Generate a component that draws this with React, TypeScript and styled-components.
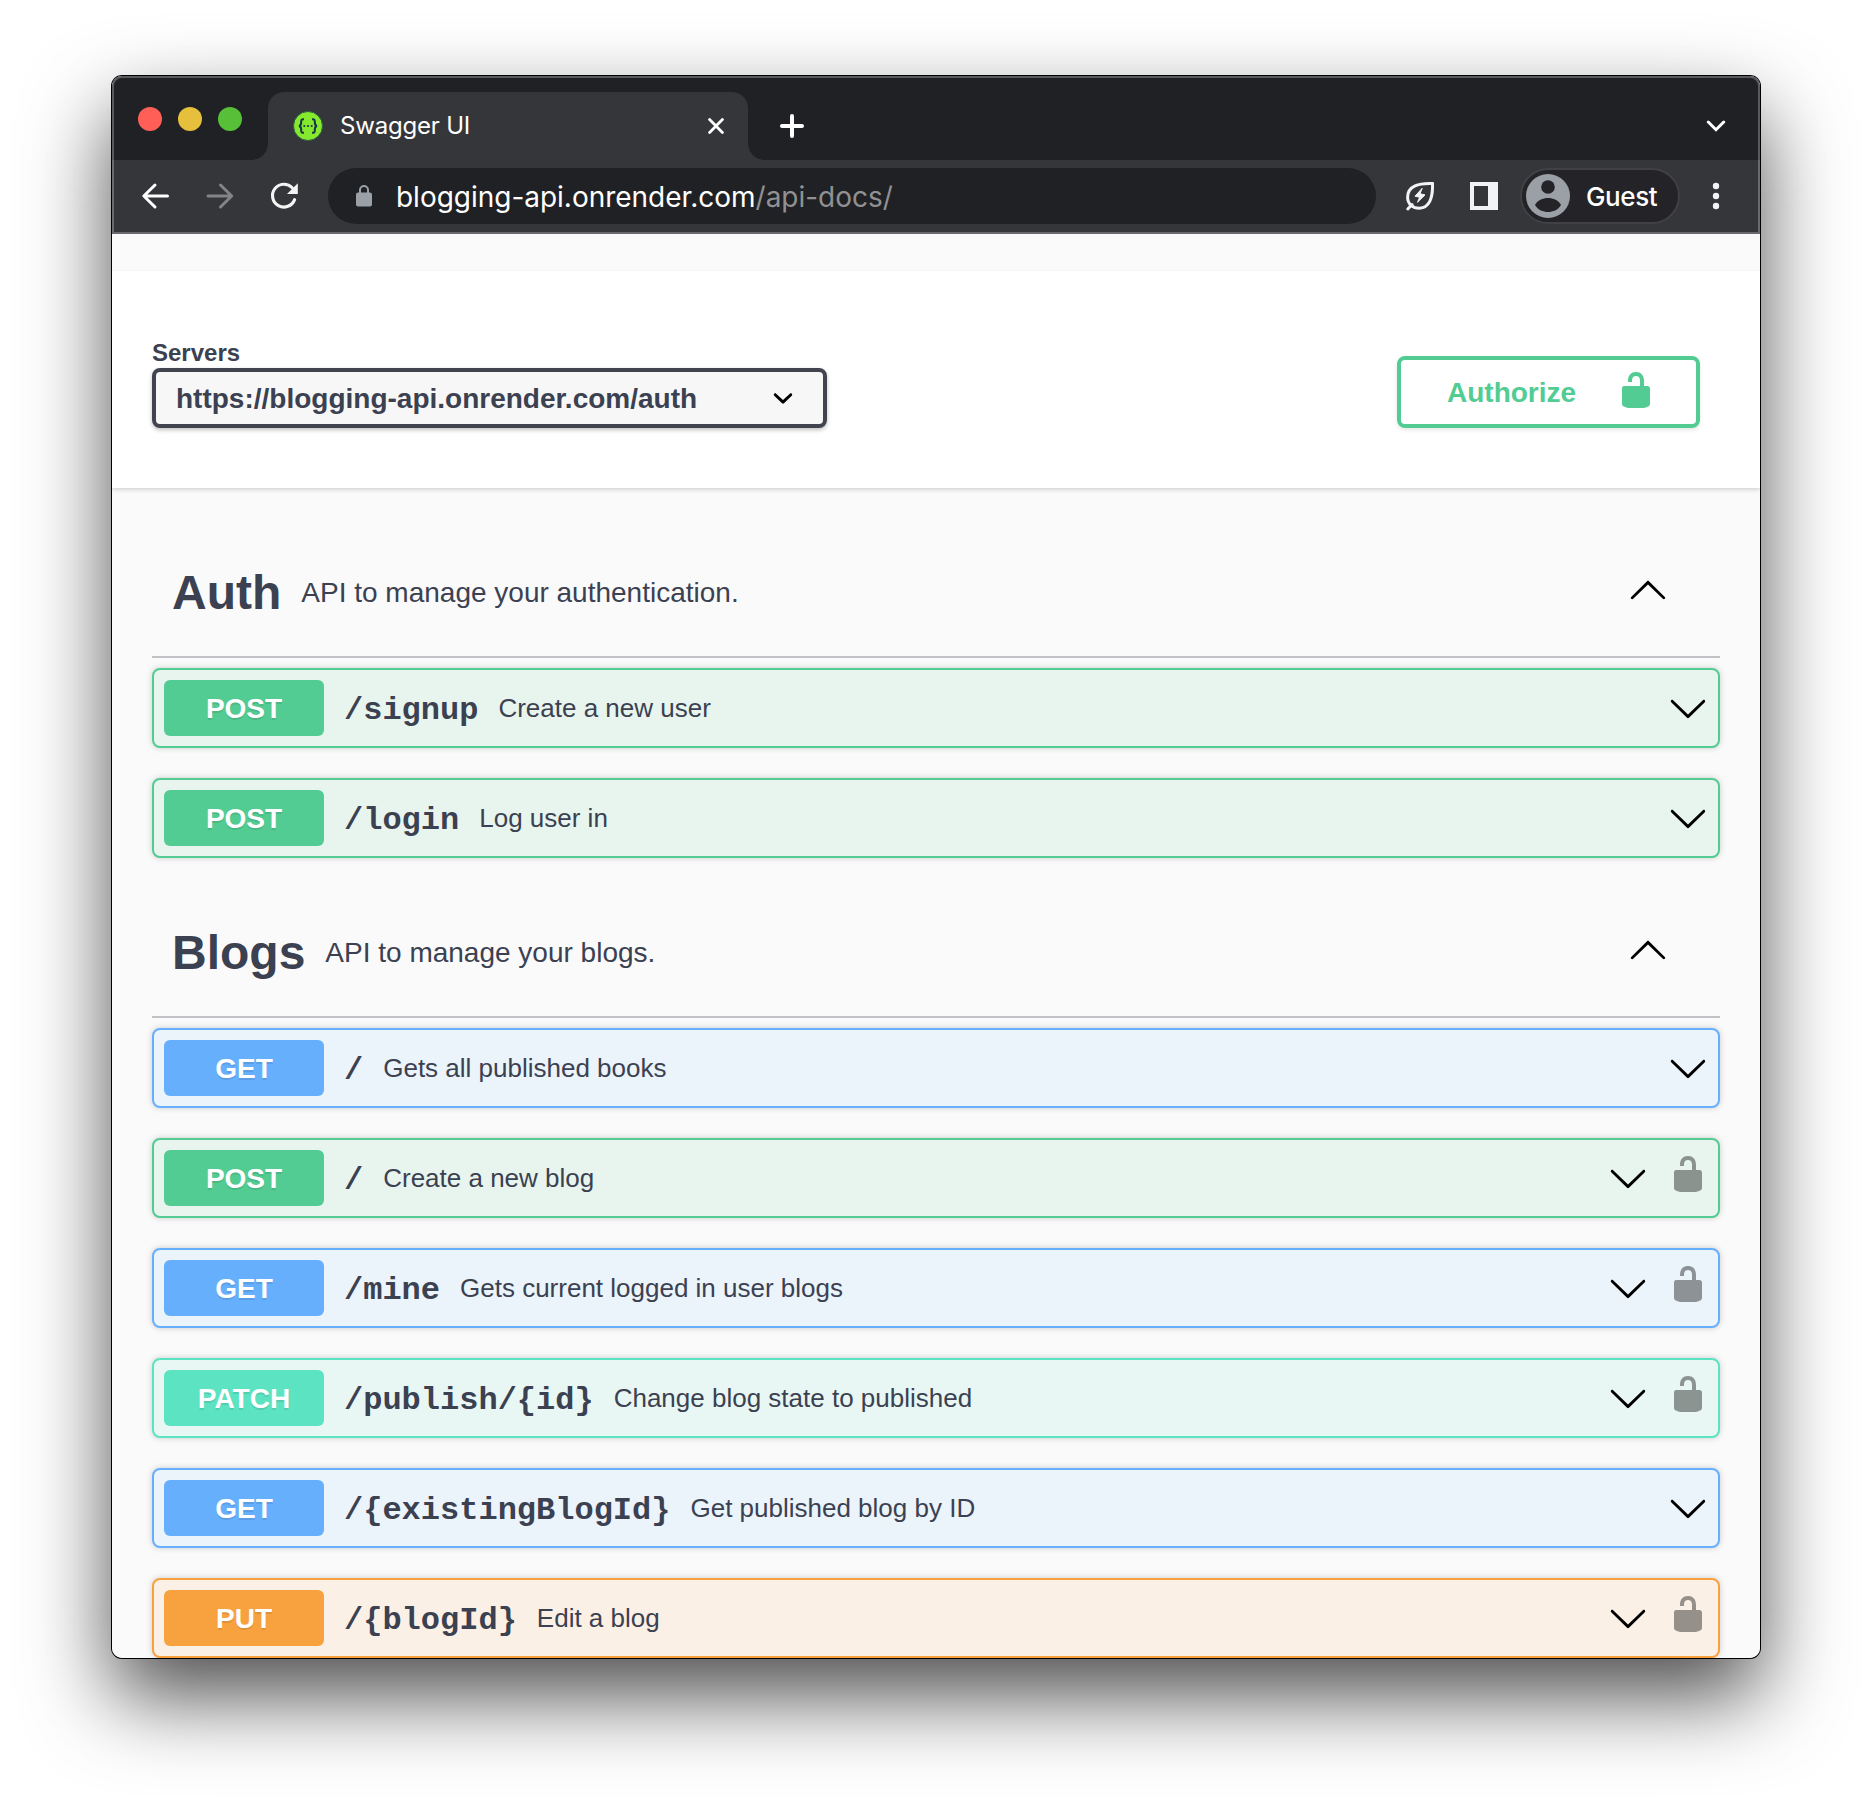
import React from 'react';
import styled, { createGlobalStyle } from 'styled-components';

const GlobalStyle = createGlobalStyle`
  * { box-sizing: border-box; }
  body {
    margin: 0;
    background: #fff;
    font-family: "Liberation Sans", Arial, sans-serif;
    color: #3b4151;
  }
`;

const Desktop = styled.div`
  height: 1806px;
  padding: 76px 0 0 112px;
  overflow: hidden;
`;

const Window = styled.div`
  width: 1648px;
  height: 1582px;
  border-radius: 10px;
  box-shadow: 0 0 0 1px #000, 0 38px 84px rgba(0, 0, 0, 0.7);
`;

const Clip = styled.div`
  display: flex;
  flex-direction: column;
  height: 100%;
  border-radius: 10px;
  overflow: hidden;
  background: #fafafa;
`;

const Chrome = styled.header`
  position: relative;
  flex: none;
  font-family: Inter, "Noto Sans", sans-serif;
  color: #fff;

  &::after {
    content: '';
    position: absolute;
    inset: 0;
    border: 2px solid rgba(255, 255, 255, 0.26);
    border-radius: 10px 10px 0 0;
    pointer-events: none;
  }
`;

const TabStrip = styled.div`
  display: flex;
  align-items: center;
  height: 84px;
  padding: 16px 34px 0 26px;
  background: #202124;
`;

const Lights = styled.div`
  display: flex;
  gap: 16px;
  margin: 0 26px 14px 0;
`;

const Light = styled.span<{ $color: string }>`
  width: 24px;
  height: 24px;
  border-radius: 50%;
  background: ${(p) => p.$color};
`;

const Tab = styled.div`
  position: relative;
  display: flex;
  align-items: center;
  width: 480px;
  height: 68px;
  margin-right: 32px;
  padding: 0 24px 0 25px;
  border-radius: 16px 16px 0 0;
  background: #35363a;

  &::before,
  &::after {
    content: '';
    position: absolute;
    bottom: 0;
    width: 16px;
    height: 16px;
  }
  &::before {
    left: -16px;
    background: radial-gradient(circle at 0 0, transparent 15.5px, #35363a 16px);
  }
  &::after {
    right: -16px;
    background: radial-gradient(circle at 100% 0, transparent 15.5px, #35363a 16px);
  }
`;

const TabTitle = styled.span`
  flex: 1;
  margin-left: 17px;
  font-size: 24px;
  line-height: 30px;
  letter-spacing: -0.2px;
`;

const Spacer = styled.div`
  flex: 1;
`;

const Toolbar = styled.div`
  display: flex;
  align-items: center;
  height: 74px;
  padding-left: 28px;
  border-bottom: 2px solid #35363a;
  background: #35363a;
`;

const NavButtons = styled.div`
  display: flex;
  gap: 32px;
  margin-right: 28px;
`;

const Omnibox = styled.div`
  display: flex;
  align-items: center;
  width: 1048px;
  height: 56px;
  padding-left: 28px;
  border-radius: 28px;
  background: #202124;
`;

const Url = styled.span`
  margin-left: 24px;
  padding-top: 1px;
  font-size: 28px;
  line-height: 36px;
  letter-spacing: -0.02px;
  white-space: nowrap;
`;

const UrlPath = styled.span`
  color: #919193;
`;

const LeafSlot = styled.span`
  display: flex;
  margin: 2px 36px 0 30px;
`;

const PanelIcon = styled.span`
  width: 28px;
  height: 28px;
  border: 4px solid #f1f3f4;
  border-right-width: 10px;
`;

const Profile = styled.div`
  display: flex;
  align-items: center;
  width: 160px;
  height: 56px;
  margin: 0 32px 0 22px;
  padding-left: 4px;
  border: 2px solid #404045;
  border-radius: 28px;
  background: #242328;
`;

const ProfileName = styled.span`
  margin-left: 16px;
  padding-top: 1px;
  font-size: 26px;
  font-weight: 500;
  line-height: 32px;
  letter-spacing: -0.4px;
`;

const Page = styled.main`
  display: flex;
  flex-direction: column;
  flex: 1;
  padding-top: 37px;
`;

const SchemeBar = styled.section`
  display: flex;
  flex: none;
  justify-content: space-between;
  align-items: flex-end;
  height: 217px;
  padding: 0 60px 60px 40px;
  background: #fff;
  box-shadow: 0 2px 4px rgba(0, 0, 0, 0.15);
`;

const ServerField = styled.div`
  display: flex;
  flex-direction: column;
  width: 675px;
`;

const ServerLabel = styled.span`
  font-size: 24px;
  font-weight: 700;
  line-height: 31px;
`;

const ServerSelect = styled.div`
  display: flex;
  align-items: center;
  justify-content: space-between;
  height: 60px;
  padding: 0 20px;
  border: 4px solid #41444e;
  border-radius: 8px;
  background: #f7f7f7;
  box-shadow: 0 2px 4px rgba(0, 0, 0, 0.25);
  font-size: 28px;
  font-weight: 700;
`;

const AuthorizeButton = styled.div`
  display: flex;
  align-items: center;
  justify-content: space-between;
  width: 303px;
  height: 72px;
  padding: 0 40px 0 46px;
  border: 4px solid #52cc93;
  border-radius: 8px;
  box-shadow: 0 2px 4px rgba(0, 0, 0, 0.1);
  color: #52cc93;
  font-size: 28px;
  font-weight: 700;

  svg {
    margin-bottom: 4px;
  }
`;

const ButtonLabel = styled.span`
  padding-top: 2px;
`;

const Sections = styled.div`
  padding: 40px 40px 0;
`;

const TagHeader = styled.div`
  display: flex;
  align-items: center;
  height: 130px;
  margin-bottom: 10px;
  padding: 0 52px 0 20px;
  border-bottom: 2px solid rgba(59, 65, 81, 0.3);

  > svg {
    margin-bottom: 6px;
  }
`;

const TagName = styled.h3`
  margin: 0;
  font-size: 48px;
  font-weight: 700;
`;

const TagText = styled.span`
  flex: 1;
  padding: 2px 0 0 20px;
  font-size: 28px;
`;

const OperationRow = styled.div<{ $color: string; $tint: string }>`
  display: flex;
  align-items: center;
  height: 80px;
  margin-bottom: 30px;
  padding: 0 10px;
  border: 2px solid ${(p) => p.$color};
  border-radius: 8px;
  background: ${(p) => p.$tint};
  box-shadow: 0 0 6px rgba(0, 0, 0, 0.19);
`;

const Method = styled.span<{ $color: string }>`
  width: 160px;
  height: 56px;
  padding-top: 1px;
  border-radius: 6px;
  background: ${(p) => p.$color};
  color: #fff;
  font-size: 28px;
  font-weight: 700;
  line-height: 56px;
  text-align: center;
  text-shadow: 0 2px 0 rgba(0, 0, 0, 0.1);
`;

const Path = styled.span`
  padding: 5px 20px 0;
  font-family: "Liberation Mono", monospace;
  font-size: 32px;
  font-weight: 700;
`;

const Summary = styled.span`
  flex: 1;
  font-size: 26px;
`;

const RowLock = styled.span`
  display: flex;
  margin: 0 0 8px 20px;
  color: rgba(0, 0, 0, 0.4);
`;

const CHEVRON_DOWN =
  'M17.418 6.109c.272-.268.709-.268.979 0s.271.701 0 .969l-7.908 7.83c-.27.268-.707.268-.979 0l-7.908-7.83c-.27-.268-.27-.701 0-.969.271-.268.709-.268.979 0L10 13.25l7.418-7.141z';
const CHEVRON_UP =
  'M17.418 14.908c.272.268.709.268.979 0s.271-.701 0-.969l-7.908-7.83c-.27-.268-.707-.268-.979 0l-7.908 7.83c-.27.268-.27.701 0 .969.271.268.709.268.979 0L10 7.767l7.418 7.141z';
const SELECT_ARROW =
  'M13.418 7.859c.271-.268.709-.268.978 0 .27.268.272.701 0 .969l-3.908 3.83c-.27.268-.707.268-.979 0l-3.908-3.83c-.27-.267-.27-.701 0-.969.271-.268.709-.268.978 0L10 11l3.418-3.141z';
const UNLOCKED =
  'M15.8 8H14V5.6C14 2.703 12.665 1 10 1 7.334 1 6 2.703 6 5.6V6h2v-.801C8 3.754 8.797 3 10 3c1.203 0 2 .754 2 2.199V8H4c-.553 0-1 .646-1 1.199V17c0 .549.428 1.139.951 1.307l1.197.387C5.672 18.861 6.55 19 7.1 19h5.8c.549 0 1.428-.139 1.951-.307l1.196-.387c.524-.167.953-.757.953-1.306V9.199C17 8.646 16.352 8 15.8 8z';

const Glyph = ({ d, color = '#000' }: { d: string; color?: string }) => (
  <svg width="40" height="40" viewBox="0 0 20 20" fill={color}>
    <path d={d} />
  </svg>
);

const SwaggerLogo = () => (
  <svg width="30" height="30" viewBox="0 0 30 30">
    <circle cx="15" cy="15" r="14.5" fill="#85ea2d" stroke="#2b5a45" strokeWidth="1" />
    <g fill="none" stroke="#173647" strokeWidth="2">
      <path d="M11 8.2C8.6 8 8.1 9 8.2 10.8C8.4 13.4 8 14.6 6 15C8 15.4 8.4 16.6 8.2 19.2C8.1 21 8.6 22 11 21.8" />
      <path d="M19 8.2C21.4 8 21.9 9 21.8 10.8C21.6 13.4 22 14.6 24 15C22 15.4 21.6 16.6 21.8 19.2C21.9 21 21.4 22 19 21.8" />
    </g>
    <g fill="#173647">
      <circle cx="11.3" cy="15" r="1.1" />
      <circle cx="15" cy="15" r="1.1" />
      <circle cx="18.7" cy="15" r="1.1" />
    </g>
  </svg>
);

const CloseIcon = () => (
  <svg width="16" height="16" viewBox="0 0 16 16" stroke="#fff" strokeWidth="2.8" strokeLinecap="round">
    <path d="M1.6 1.6L14.4 14.4M14.4 1.6L1.6 14.4" />
  </svg>
);

const PlusIcon = () => (
  <svg width="24" height="24" viewBox="0 0 24 24" stroke="#fff" strokeWidth="4" strokeLinecap="round">
    <path d="M12 2V22M2 12H22" />
  </svg>
);

const TabSearchIcon = () => (
  <svg width="20" height="12" viewBox="0 0 20 12" fill="none" stroke="#fff" strokeWidth="3" strokeLinecap="round">
    <path d="M2.3 2L10 9.7L17.7 2" />
  </svg>
);

const ArrowIcon = ({ forward = false }: { forward?: boolean }) => (
  <svg
    width="32"
    height="32"
    viewBox="0 0 32 32"
    fill="none"
    stroke={forward ? '#838486' : '#fff'}
    strokeWidth="3"
    strokeLinecap="round"
    strokeLinejoin="round"
  >
    {forward ? <path d="M4 16H27.5M16.500 5L27.700 16L16.500 27" /> : <path d="M27.500 16H4M15 5L3.800 16L15 27" />}
  </svg>
);

const ReloadIcon = () => (
  <svg width="32" height="32" viewBox="0 0 32 32">
    <path d="M26.6 19.6A11.4 11.4 0 1 1 24.2 7.8" fill="none" stroke="#f4f4f5" strokeWidth="3.1" strokeLinecap="round" />
    <path d="M29.8 3.2V14H19Z" fill="#f4f4f5" />
  </svg>
);

const SecureIcon = () => (
  <svg width="16" height="22" viewBox="0 0 16 22">
    <path d="M4 9V5a4 4 0 0 1 8 0V9" fill="none" stroke="#9aa0a6" strokeWidth="2" />
    <rect y="7.5" width="16" height="14" rx="2" fill="#9aa0a6" />
  </svg>
);

const LeafIcon = () => (
  <svg width="28" height="30" viewBox="0 0 28 30" strokeLinecap="round">
    <path
      d="M26.500 1.600C13 1 1.700 3.800 1.600 15.200C1.600 22 7 26.300 13.500 26.200C23 26 27 16.500 26.500 1.600Z"
      fill="none"
      stroke="#f1f3f4"
      strokeWidth="3"
    />
    <path d="M6 22.500L1.800 27" fill="none" stroke="#f1f3f4" strokeWidth="3" />
    <path
      d="M16 6.500L9 14.200L13.600 15.300L11.500 20.300L19 12.900L14.300 11.800Z"
      fill="#f1f3f4"
      stroke="#f1f3f4"
      strokeWidth="1"
      strokeLinejoin="round"
    />
  </svg>
);

const Avatar = () => (
  <svg width="44" height="44" viewBox="0 0 44 44">
    <circle cx="22" cy="22" r="22" fill="#9aa0a6" />
    <circle cx="22" cy="13" r="6.8" fill="#242328" />
    <path d="M9 31C11 26.500 17 24 22 24S33 26.500 35 31C32 36 27 38 22 38S12 36 9 31Z" fill="#242328" />
  </svg>
);

const MenuDots = () => (
  <svg width="8" height="28" viewBox="0 0 8 28" fill="#f1f3f4">
    <circle cx="4" cy="4" r="3.2" />
    <circle cx="4" cy="14" r="3.2" />
    <circle cx="4" cy="24" r="3.2" />
  </svg>
);

type Verb = 'GET' | 'POST' | 'PATCH' | 'PUT';

const VERBS: Record<Verb, { color: string; tint: string }> = {
  GET: { color: '#66affd', tint: '#ebf3fb' },
  POST: { color: '#52cc93', tint: '#e8f5ee' },
  PATCH: { color: '#5be3c2', tint: '#e9f7f4' },
  PUT: { color: '#f8a13f', tint: '#fbf0e6' },
};

interface Operation {
  verb: Verb;
  path: string;
  summary: string;
  secured?: boolean;
}

const TAGS: { name: string; text: string; operations: Operation[] }[] = [
  {
    name: 'Auth',
    text: 'API to manage your authentication.',
    operations: [
      { verb: 'POST', path: '/signup', summary: 'Create a new user' },
      { verb: 'POST', path: '/login', summary: 'Log user in' },
    ],
  },
  {
    name: 'Blogs',
    text: 'API to manage your blogs.',
    operations: [
      { verb: 'GET', path: '/', summary: 'Gets all published books' },
      { verb: 'POST', path: '/', summary: 'Create a new blog', secured: true },
      { verb: 'GET', path: '/mine', summary: 'Gets current logged in user blogs', secured: true },
      { verb: 'PATCH', path: '/publish/{id}', summary: 'Change blog state to published', secured: true },
      { verb: 'GET', path: '/{existingBlogId}', summary: 'Get published blog by ID' },
      { verb: 'PUT', path: '/{blogId}', summary: 'Edit a blog', secured: true },
    ],
  },
];

const OperationItem = ({ verb, path, summary, secured }: Operation) => {
  const { color, tint } = VERBS[verb];
  return (
    <OperationRow $color={color} $tint={tint}>
      <Method $color={color}>{verb}</Method>
      <Path>{path}</Path>
      <Summary>{summary}</Summary>
      <Glyph d={CHEVRON_DOWN} />
      {secured && (
        <RowLock>
          <Glyph d={UNLOCKED} color="currentColor" />
        </RowLock>
      )}
    </OperationRow>
  );
};

export default function App() {
  return (
    <Desktop>
      <GlobalStyle />
      <Window>
        <Clip>
          <Chrome>
            <TabStrip>
              <Lights>
                <Light $color="#ff5f57" />
                <Light $color="#e6c03c" />
                <Light $color="#58c038" />
              </Lights>
              <Tab>
                <SwaggerLogo />
                <TabTitle>Swagger UI</TabTitle>
                <CloseIcon />
              </Tab>
              <PlusIcon />
              <Spacer />
              <TabSearchIcon />
            </TabStrip>
            <Toolbar>
              <NavButtons>
                <ArrowIcon />
                <ArrowIcon forward />
                <ReloadIcon />
              </NavButtons>
              <Omnibox>
                <SecureIcon />
                <Url>
                  blogging-api.onrender.com<UrlPath>/api-docs/</UrlPath>
                </Url>
              </Omnibox>
              <LeafSlot>
                <LeafIcon />
              </LeafSlot>
              <PanelIcon />
              <Profile>
                <Avatar />
                <ProfileName>Guest</ProfileName>
              </Profile>
              <MenuDots />
            </Toolbar>
          </Chrome>
          <Page>
            <SchemeBar>
              <ServerField>
                <ServerLabel>Servers</ServerLabel>
                <ServerSelect>
                  <ButtonLabel>https://blogging-api.onrender.com/auth</ButtonLabel>
                  <Glyph d={SELECT_ARROW} />
                </ServerSelect>
              </ServerField>
              <AuthorizeButton>
                <ButtonLabel>Authorize</ButtonLabel>
                <Glyph d={UNLOCKED} color="#52cc93" />
              </AuthorizeButton>
            </SchemeBar>
            <Sections>
              {TAGS.map((tag) => (
                <React.Fragment key={tag.name}>
                  <TagHeader>
                    <TagName>{tag.name}</TagName>
                    <TagText>{tag.text}</TagText>
                    <Glyph d={CHEVRON_UP} />
                  </TagHeader>
                  {tag.operations.map((op) => (
                    <OperationItem key={op.verb + op.path} {...op} />
                  ))}
                </React.Fragment>
              ))}
            </Sections>
          </Page>
        </Clip>
      </Window>
    </Desktop>
  );
}
